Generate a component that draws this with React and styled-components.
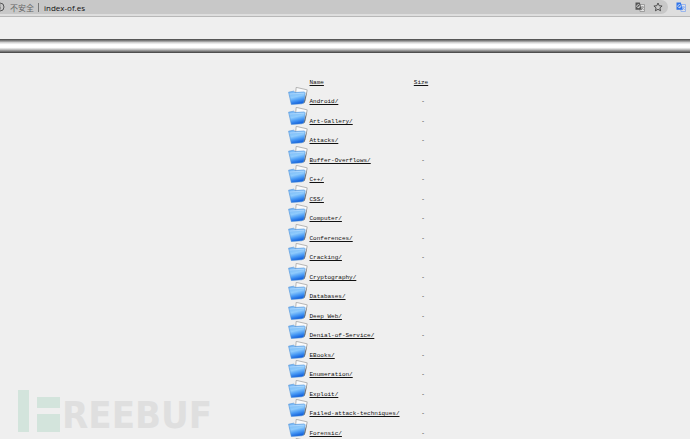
import styled, { createGlobalStyle } from "styled-components"

const folders = [
  "Android/", "Art-Gallery/", "Attacks/", "Buffer-Overflows/", "C++/", "CSS/",
  "Computer/", "Conferences/", "Cracking/", "Cryptography/", "Databases/",
  "Deep Web/", "Denial-of-Service/", "EBooks/", "Enumeration/", "Exploit/",
  "Failed-attack-techniques/", "Forensic/", "",
]

export default function App() {
  return (
    <Page>
      <GlobalStyle />
      <Toolbar>
        <Address>
          <Info><InfoIcon /></Info>
          <Security>不安全</Security>
          <Divider />
          <Url type="text" aria-label="Address" defaultValue="index-of.es" />
          <IconButton aria-label="Translate page"><TranslateIcon front="#909090" back="#555555" /></IconButton>
          <IconButton aria-label="Bookmark"><StarIcon /></IconButton>
        </Address>
        <IconButton aria-label="Translate"><TranslateIcon front="#86aaf0" back="#2f74ea" /></IconButton>
      </Toolbar>
      <Banner />
      <Content>
        <Listing>
          <thead>
            <tr>
              <th />
              <Heading><Link href="#name">Name</Link></Heading>
              <SizeHeading><Link href="#size">Size</Link></SizeHeading>
            </tr>
          </thead>
          <tbody>
            {folders.map((name, i) => (
              <Row key={i}>
                <IconCell><FolderIcon id={"f" + i} /></IconCell>
                <NameCell>{name && <Link href={"#" + name}>{name}</Link>}</NameCell>
                <SizeCell>{name && "-"}</SizeCell>
              </Row>
            ))}
          </tbody>
        </Listing>
      </Content>
      <Watermark>
        <Mark viewBox="0 0 42 42" aria-hidden="true">
          <path d="M0 0h11v42H0zM19 7h23v11H19zM19 24h23v18H19z" fill="#d3e4dc" />
        </Mark>
        <span>REEBUF</span>
      </Watermark>
    </Page>
  )
}

function InfoIcon() {
  return (
    <Small viewBox="0 0 10 10" aria-hidden="true">
      <circle cx="5" cy="5" r="4" fill="none" stroke="#555" />
      <path d="M5 4.5v3M5 2.5v1" stroke="#555" />
    </Small>
  )
}

function TranslateIcon({ front, back }) {
  return (
    <Small viewBox="0 0 10 10" aria-hidden="true">
      <path d="M4 2.5h5.5v7H5z" fill="#e4e4e4" stroke={front} strokeWidth=".8" />
      <path d="M5.5 5h3.5M7.2 4v1M8.3 5c-.4 1.5-1.2 2.4-2.5 3M6.3 5.5l2.5 2.5" fill="none" stroke={front} strokeWidth=".8" />
      <path d="M.5.5h4.3l2 7.2H.5z" fill={back} />
      <path d="M4.6 3.3a1.5 1.5 0 1 0 .2 1.3H3.5" fill="none" stroke="#eee" strokeWidth=".8" />
    </Small>
  )
}

function StarIcon() {
  return (
    <Small viewBox="0 0 10 10" aria-hidden="true">
      <path d="M5 1l1.2 2.7 2.9.3-2.2 1.9.7 2.9L5 7.3 2.4 8.8l.7-2.9L.9 4l2.9-.3z" fill="none" stroke="#444" strokeWidth=".9" />
    </Small>
  )
}

function FolderIcon({ id }) {
  return (
    <Folder viewBox="0 0 20 20" preserveAspectRatio="none" aria-hidden="true">
      <defs>
        <linearGradient id={id} x1="0" y1="0" x2=".3" y2="1">
          <stop offset="0" stopColor="#6fb2f4" />
          <stop offset=".5" stopColor="#8fcbfc" />
          <stop offset=".75" stopColor="#4a9bf5" />
          <stop offset="1" stopColor="#1765dd" />
        </linearGradient>
      </defs>
      <path d="M8.2.4l11 2.6-2.2 12-10-2z" fill="#fbfbfb" stroke="#888" strokeWidth=".6" />
      <path d="M19.2 4.4l-2.4 11.8-2 1.4z" fill="#666" />
      <path d="M.6 5.4l5-1 1.5 1.4 9.3-.6.8 1-1.3 10.2-1.8 1.2-10.8.8z" fill={"url(#" + id + ")"} stroke="#4c8fd8" strokeWidth=".6" />
      <path d="M1.4 7.4l15-.9" stroke="#c6e4ff" strokeWidth=".6" />
    </Folder>
  )
}

const GlobalStyle = createGlobalStyle`
  body {
    margin: 0;
    background: #efefef;
    overflow: hidden;
  }
`

const Page = styled.main`
  position: relative;
  height: 100vh;
  overflow: hidden;
  font-family: "Liberation Mono", monospace;
  font-size: 6px;
  color: #111111;
`

const Toolbar = styled.header`
  display: flex;
  align-items: flex-start;
  height: 16px;
  padding-right: 4px;
  background: #dedede;
  border-bottom: 1px solid #b8b8b8;
`

const Address = styled.div`
  flex: 1;
  display: flex;
  align-items: center;
  height: 14px;
  padding-right: 5px;
  background: #c8c8c8;
  border-radius: 0 7px 7px 0;
  font-family: "Open Sans", "Noto Sans CJK SC", sans-serif;
  font-size: 8px;
`

const Small = styled.svg`
  display: block;
  width: 10px;
  height: 10px;
`

const Info = styled.span`
  margin: 0 5px 0 -5px;
`

const Security = styled.span`
  color: #666666;
`

const Divider = styled.span`
  width: 1px;
  height: 9px;
  margin: 0 5px 0 4px;
  background: #777777;
`

const Url = styled.input`
  flex: 1;
  min-width: 0;
  padding: 0;
  border: 0;
  background: none;
  outline: none;
  color: #111111;
  font: inherit;
`

const IconButton = styled.button`
  height: 14px;
  margin-left: 8px;
  padding: 0;
  border: 0;
  background: none;
`

const Banner = styled.div`
  height: 14px;
  margin-top: 22px;
  background: linear-gradient(#444444, #8a8a8a 14%, #d8d8d8 26%, #ffffff 40%, #ffffff 60%, #d0d0d0 72%, #858585 86%, #3c3c3c);
`

const Content = styled.section`
  display: flex;
  justify-content: center;
  padding: 26px 0 0 28px;
`

const Listing = styled.table`
  border-collapse: collapse;

  th, td {
    padding: 0;
    font-weight: normal;
  }
`

const Heading = styled.th`
  height: 8px;
  line-height: 8px;
  text-align: left;
`

const SizeHeading = styled(Heading)`
  text-align: center;
`

const Link = styled.a`
  color: inherit;
  text-underline-offset: 1px;
`

const Row = styled.tr`
  height: 19px;

  &:nth-child(even) {
    height: 20px;
  }
`

const IconCell = styled.td`
  width: 22px;
`

const NameCell = styled.td`
  width: 102px;
  vertical-align: bottom;
  line-height: 8px;
`

const SizeCell = styled.td`
  width: 15px;
  vertical-align: bottom;
  line-height: 8px;
  text-align: center;

  && {
    padding-left: 4px;
  }
`

const Folder = styled.svg`
  display: block;
  width: 20px;
  height: 19px;
`

const Watermark = styled.div`
  position: absolute;
  left: 18px;
  bottom: 7px;
  display: flex;
  align-items: flex-end;
  color: #dfdfdf;
  font: bold 38px/34px "DejaVu Sans Condensed", "DejaVu Sans", sans-serif;
`

const Mark = styled.svg`
  width: 42px;
  height: 42px;
  margin-right: 2px;
`
